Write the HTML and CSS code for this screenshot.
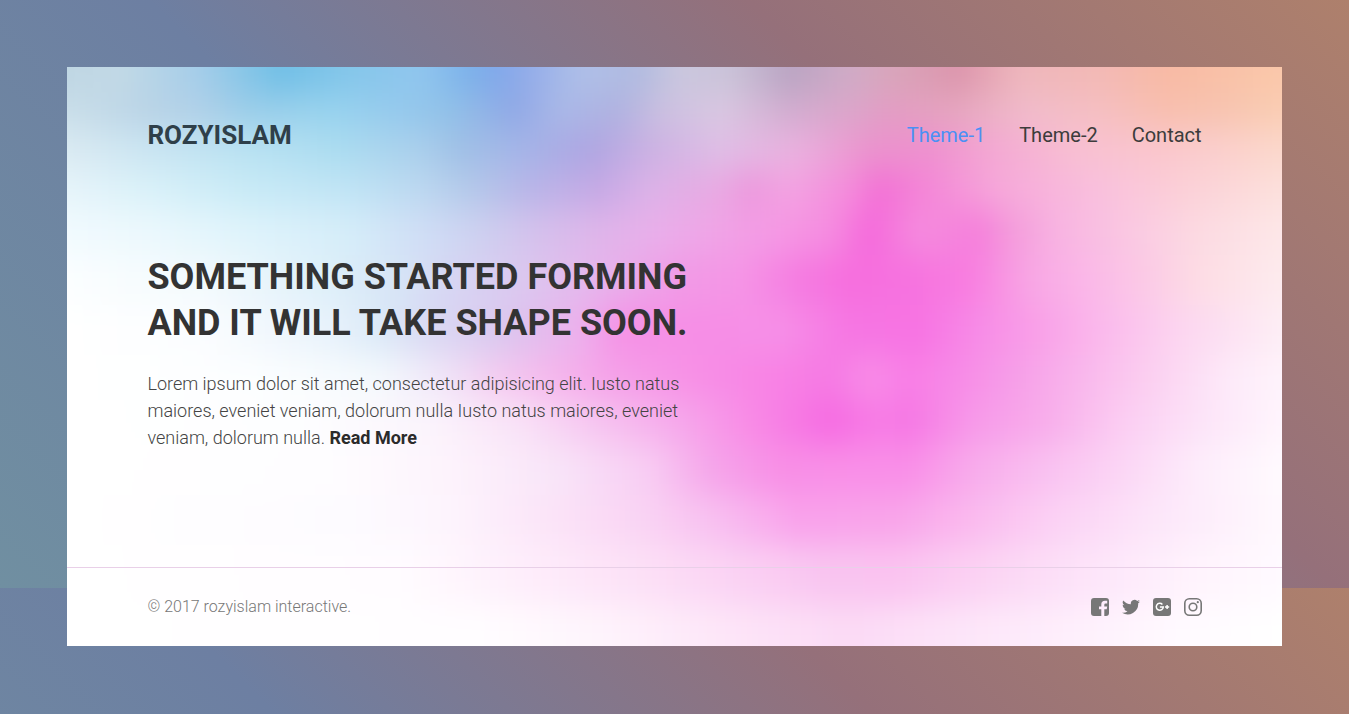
FILE: index.html
```html
<!DOCTYPE html>
<html lang="en">
<head>
<meta charset="utf-8">
<meta name="viewport" content="width=device-width, initial-scale=1">
<title>Rozyislam</title>
<link rel="stylesheet" href="styles.css">
</head>
<body>
<div class="card">
  <svg class="smoke" viewBox="67 67 1215 579" preserveAspectRatio="none" aria-hidden="true">
    <defs>
      <filter id="soften" filterUnits="userSpaceOnUse" x="-40" y="-40" width="1440" height="800" color-interpolation-filters="sRGB">
        <feGaussianBlur stdDeviation="10 16"/>
      </filter>
    </defs>
    <g id="smoke-layers" filter="url(#soften)"></g>
  </svg>
  <header class="header">
    <a class="brand" href="#">ROZYISLAM</a>
    <nav class="nav">
      <a class="nav-link active" href="#">Theme-1</a>
      <a class="nav-link" href="#">Theme-2</a>
      <a class="nav-link" href="#">Contact</a>
    </nav>
  </header>
  <main class="hero">
    <h1 class="title">SOMETHING STARTED FORMING AND IT WILL TAKE SHAPE SOON.</h1>
    <p class="lead">Lorem ipsum dolor sit amet, consectetur adipisicing elit. Iusto natus maiores, eveniet veniam, dolorum nulla Iusto natus maiores, eveniet veniam, dolorum nulla. <a class="more" href="#">Read More</a></p>
  </main>
  <footer class="footer">
    <p class="copy">© 2017 rozyislam interactive.</p>
    <div class="social">
      <a href="#" aria-label="Facebook"><svg class="icon" viewBox="0 0 18 18"><path d="M3 0H15Q18 0 18 3V15Q18 18 15 18H13.3V11.3H15.7L16.2 8.5H13.3V6.8Q13.3 5.6 14.6 5.6H16.2V2.8H14Q10.3 2.8 10.3 6.4V8.5H8V11.3H10.3V18H3Q0 18 0 15V3Q0 0 3 0Z"/></svg></a>
      <a href="#" aria-label="Twitter"><svg class="icon" viewBox="0 0 18 18"><path d="M18 3.4a7.400 7.400 0 0 1-2.100.6 3.700 3.700 0 0 0 1.600-2 7.400 7.400 0 0 1-2.300.9 3.700 3.700 0 0 0-6.300 3.400A10.500 10.500 0 0 1 1.300 2.400a3.700 3.700 0 0 0 1.100 4.900A3.700 3.700 0 0 1 .7 6.800a3.700 3.700 0 0 0 3 3.700 3.700 3.700 0 0 1-1.700.1 3.700 3.700 0 0 0 3.500 2.600A7.400 7.400 0 0 1 0 14.700 10.500 10.500 0 0 0 16.200 5.300 7.500 7.500 0 0 0 18 3.400Z"/></svg></a>
      <a href="#" aria-label="Google Plus"><svg class="icon" viewBox="0 0 18 18"><rect width="18" height="18" rx="3"/><path class="cut" d="M9.400 6.400A3.500 3.500 0 1 0 10.300 9H6.900M12 9H16.200M14.100 6.900V11.100"/></svg></a>
      <a href="#" aria-label="Instagram"><svg class="icon" viewBox="0 0 18 18"><rect class="line" x=".8" y=".8" width="16.400" height="16.400" rx="4.500"/><circle class="line" cx="9" cy="9" r="3.800"/><circle cx="13.800" cy="4.200" r="1.100"/></svg></a>
    </div>
  </footer>
</div>
<script src="smoke.js"></script>
</body>
</html>
```
FILE: styles.css
```css
* { box-sizing: border-box; }

html {
  min-height: 100%;
  background-image: linear-gradient(45deg, #708fa1 0%, #6d7fa2 38%, #95707a 69%, #ae806c 100%);
  background-size: 100% 588px;
}

body {
  margin: 0;
  padding: 5%;
  font-family: Roboto, "Liberation Sans", sans-serif;
  color: #333;
}

a { color: inherit; text-decoration: none; }

.card {
  position: relative;
  display: flex;
  flex-direction: column;
  overflow: hidden;
  background: #fff;
}

.smoke {
  position: absolute;
  inset: 0;
  width: 100%;
  height: 100%;
}

.header, .hero, .footer {
  position: relative;
  padding-left: 80px;
  padding-right: 80px;
}

.header {
  display: flex;
  align-items: center;
  justify-content: space-between;
  padding-top: 48px;
}

.brand {
  font-size: 26px;
  line-height: 40px;
  font-weight: 700;
  color: #2f3f49;
}

.nav { display: flex; gap: 34px; }

.nav-link { font-size: 20px; line-height: 40px; color: #3c3c3c; }
.nav-link.active { color: #4a90f5; }

.hero { padding-top: 99px; padding-bottom: 116px; }

.title {
  max-width: 580px;
  margin: 0 0 24px;
  font-size: 36px;
  line-height: 46px;
  font-weight: 700;
}

.lead {
  max-width: 560px;
  margin: 0;
  font-size: 18px;
  line-height: 27px;
  font-weight: 300;
  color: #444;
}

.more { font-weight: 700; color: #2b2b2b; }

.footer {
  display: flex;
  align-items: center;
  justify-content: space-between;
  padding-top: 26px;
  padding-bottom: 26px;
  border-top: 1px solid #e9d0e8;
}

.copy {
  margin: 0;
  font-size: 16px;
  line-height: 26px;
  font-weight: 300;
  color: #777;
}

.social { display: flex; gap: 13px; }
.social a { display: flex; }

.icon { width: 18px; height: 18px; fill: #777; }
.icon .cut { fill: none; stroke: #fff; stroke-width: 1.5; }
.icon .line { fill: none; stroke: #777; stroke-width: 1.6; }
```
FILE: smoke.js
```javascript
// Coloured smoke: horizontal bands of colour stops, blended by the blur filter.
const bands = [
  [75, "67 bfd6e3,120 c2d9e6,200 a4cde9,280 70bfe6,350 84c6ea,420 90c6ee,470 7cb1ea,500 82a8ea,530 94ade9,580 aebfe8,640 b1bbe0,680 cac7de,730 cac3d8,790 b9a4c2,850 cfabc6,890 d8a6bb,960 dc95ac,1020 eeb6bc,1100 f3b9b5,1170 f8baa4,1282 fac8aa"],
  [110, "67 c9dee9,150 b9d3e6,200 b0d0e8,250 9bcde9,330 98d3ee,400 95c9ed,450 91c1e8,515 90a8e6,560 a9b8e8,620 b0b2e0,660 cabfe0,720 d9c8e2,790 d2add0,860 dda4c9,890 e39cc4,950 e5a5bf,1030 f1bccb,1100 f5bfc2,1170 f8bfae,1220 f7c3b0,1282 facdb3"],
  [150, "67 daeaf2,150 cae5f2,250 b9e2f2,340 abdcf0,420 aacfec,460 a0c0e6,520 a4b5e8,590 aea5e2,650 cbb1e3,720 dfbee6,800 eab0de,870 eb93cd,930 ee90cf,1000 f4aad3,1080 f8c0d2,1160 fac6cd,1282 fbd8cc"],
  [190, "67 e6f4fa,150 d9f1f9,250 c8eaf6,350 c0e4f5,420 bcd8f0,470 b4c9ea,530 b9b5e8,600 c6a9e5,650 dcb2e8,720 e9a9e2,750 ec98dd,790 f3a3e2,850 f48bdb,880 f370d5,940 f48cd8,1000 f6a8da,1100 f9c0dd,1180 fbcfd7,1282 fce0dc"],
  [230, "67 f1fafe,150 ebf8fd,250 def3fb,350 d5edf9,430 cfdcf5,480 cdd0f0,540 d5c0ec,600 dfb5ea,660 eaaeea,720 f0a3e6,780 f598e4,830 f58ce0,870 f569db,920 f58bde,980 f57fdb,1010 f39adb,1060 f8b4e2,1130 fac8e2,1200 fcdae2,1282 fde7e8"],
  [280, "67 fbfeff,200 f3fafd,330 ddeff9,400 d6e4f6,450 d6d6f3,520 dbc8ef,600 e6b4ec,680 f19ae6,740 f595e6,800 f57be1,850 f66ede,910 f672df,970 f87de0,1030 f8a6e4,1080 fab5e8,1150 fbcbe6,1200 fddce4,1282 fdebee"],
  [330, "67 ffffff,200 fbfdff,330 e8f2fb,380 dbe9f7,430 dad9f3,500 dac8ef,580 ecb0ec,620 f592e6,700 f68ee6,780 f68fe7,850 f676e3,920 f773e3,980 f78ce7,1040 f9a0e8,1100 fab8ec,1180 fcd5f0,1282 fdeef5"],
  [380, "67 ffffff,250 fcfeff,380 f4f9fd,440 f0e6f8,500 f4caf0,560 f5b4ec,620 f59fe8,700 f78fe6,780 f881e5,830 f57ae3,870 f88ce8,910 f87ee6,960 f78be7,1020 f6a0e8,1080 f9b6ec,1150 fbcff0,1230 fdeaf9,1282 fef3fb"],
  [420, "67 ffffff,300 fdfeff,430 fbf4fc,520 f9e2f7,600 f6c4f0,680 f6a8eb,750 f88be6,830 f66be2,880 f77ce5,910 f677e4,970 f798e9,1050 f8aeeb,1120 fbccf2,1200 fce3f8,1282 fff5fd"],
  [470, "67 ffffff,330 fefdff,450 fdf3fc,560 f8e4f8,650 f8ccf3,710 f5a6ea,780 f88fe6,870 f98fe8,910 f98fe8,970 f8aaeb,1040 f9bff0,1120 fbd5f5,1200 fdedfb,1282 fffafe"],
  [520, "67 ffffff,350 fdfbff,450 fdf4fd,550 fbe4f8,650 f9d2f3,720 f8bef0,800 f9a1eb,900 f9a5ea,970 fab9ee,1050 fbd0f4,1150 fce5f9,1282 fff9fe"],
  [570, "67 ffffff,400 fffcff,520 feeefb,650 fcdff6,750 fad0f3,830 f9c4f0,900 fac3f0,1000 fbd6f4,1100 fde6fa,1200 fff4fd,1282 fffaff"],
  [640, "67 ffffff,480 fffdff,600 fef4fc,720 fde6f8,850 fbdaf5,940 fce3f8,1080 fef0fc,1180 fffaff,1282 ffffff"]
];

const layers = document.getElementById("smoke-layers");
const make = (name, attrs, parent) => {
  const el = document.createElementNS("http://www.w3.org/2000/svg", name);
  Object.entries(attrs).forEach(([key, value]) => el.setAttribute(key, value));
  return parent.appendChild(el);
};

bands.forEach(([y, stops], i) => {
  const top = i ? (bands[i - 1][0] + y) / 2 : -20;
  const bottom = i < bands.length - 1 ? (y + bands[i + 1][0]) / 2 : 740;
  const gradient = make("linearGradient", { id: "band" + i, gradientUnits: "userSpaceOnUse", x1: 67, x2: 1282, y1: 0, y2: 0 }, layers);
  stops.split(",").forEach((stop) => {
    const [x, color] = stop.split(" ");
    make("stop", { offset: (x - 67) / 1215, "stop-color": "#" + color }, gradient);
  });
  make("rect", { x: -20, y: top, width: 1400, height: bottom - top, fill: "url(#band" + i + ")", "shape-rendering": "crispEdges" }, layers);
});
```
